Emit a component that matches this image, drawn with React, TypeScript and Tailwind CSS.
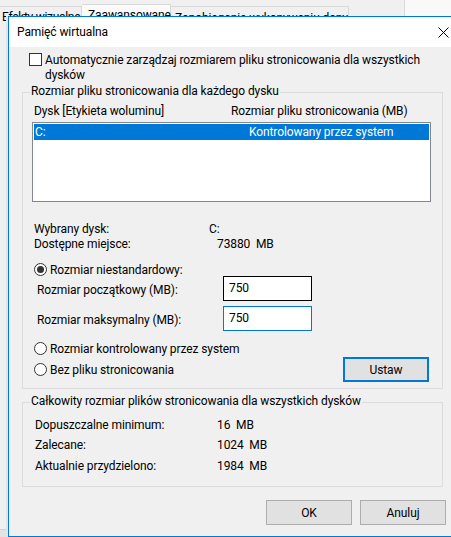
import React from "react";

const font = { fontFamily: "Roboto, 'Noto Sans', sans-serif", letterSpacing: "-0.1px" };

function Radio({ checked }: { checked?: boolean }) {
  return (
    <span className="w-[13px] h-[13px] rounded-full border border-[#333333] bg-white flex items-center justify-center shrink-0">
      {checked && <span className="w-[7px] h-[7px] rounded-full bg-[#333333]" />}
    </span>
  );
}

function Btn({ children, focused }: { children: React.ReactNode; focused?: boolean }) {
  return (
    <div
      className={
        "w-[86px] h-[25px] flex items-center justify-center pt-[1px] bg-[#e1e1e1] text-[#000] shrink-0 " +
        (focused ? "border-2 border-[#0078d7]" : "border border-[#adadad]")
      }
    >
      {children}
    </div>
  );
}

function Legend({ children }: { children: React.ReactNode }) {
  return (
    <span className="absolute left-[7px] top-[-9px] px-[1px] h-[15px] bg-[#f0f0f0] whitespace-nowrap">
      {children}
    </span>
  );
}

export default function App() {
  return (
    <div className="relative w-[451px] h-[537px] overflow-hidden bg-[#f0f0f0] text-[12px] leading-[15px] text-black" style={font}>
      {/* background parent window */}
      <div className="absolute left-0 top-0 w-[405px] h-[537px] bg-[#f0f0f0] border-r border-[#dadada]">
        <div className="flex items-start h-[30px]">
          <div className="w-[82px] h-[26px] mt-[6px] border-r border-t border-[#d9d9d9] pl-[2px] pt-[3px] whitespace-nowrap" style={{ letterSpacing: "-0.3px" }}>Efekty wizualne</div>
          <div className="w-[89px] h-[28px] mt-[4px] bg-[#fafafa] border-r border-t border-[#d9d9d9] pl-[6px] pt-[3px] whitespace-nowrap">Zaawansowane</div>
          <div className="w-[178px] h-[26px] mt-[6px] border-r border-t border-[#d9d9d9] pl-[4px] pt-[4px] whitespace-nowrap overflow-hidden">Zapobieganie wykonywaniu danych</div>
        </div>
        <div className="absolute left-0 top-[529px] w-[404px] h-[8px] bg-[#e3e3e3] border-t border-[#d0d0d0]" />
      </div>
      <div className="absolute left-[405px] top-0 w-[46px] h-[537px] bg-[#f9f9f9]" />
      <div className="absolute left-[6px] top-[16px] w-[2px] h-[521px] bg-[#e4e4e4]" />

      {/* dialog window */}
      <div className="absolute left-[8px] top-[16px] w-[460px] h-[521px] border border-[#0078d7] bg-[#f0f0f0] flex flex-col">
        <div className="h-[30px] bg-white flex items-center pl-[8px] pt-[1px] relative shrink-0">
          <span>Pamięć wirtualna</span>
          <svg className="absolute left-[429px] top-[10px]" width="11" height="11" viewBox="0 0 11 11">
            <path d="M0.5 0.5 L10.5 10.5 M10.5 0.5 L0.5 10.5" stroke="#000" strokeWidth="1" fill="none" />
          </svg>
        </div>
        <div className="h-[489px] flex flex-col pl-[13px] pt-[5px]">
          {/* checkbox */}
          <div className="flex items-start ml-[7px]">
            <span className="w-[13px] h-[13px] mt-[1px] border border-[#333333] bg-white shrink-0" />
            <span className="ml-[3px] pt-[1px]">
              Automatycznie zarządzaj rozmiarem pliku stronicowania dla wszystkich
              <br />
              dysków
            </span>
          </div>

          {/* group 1 */}
          <div className="relative mt-[9px] w-[421px] border border-[#dcdcdc] pb-[6px]">
            <Legend>Rozmiar pliku stronicowania dla każdego dysku</Legend>
            <div className="flex mt-[11px] h-[15px]">
              <span className="ml-[11px] w-[197px]">Dysk [Etykieta woluminu]</span>
              <span>Rozmiar pliku stronicowania (MB)</span>
            </div>
            <div className="ml-[9px] mt-[3px] w-[399px] h-[80px] border border-[#828790] bg-white p-[1px]">
              <div className="h-[16px] bg-[#0078d7] text-white flex items-center pt-[1px]">
                <span className="ml-[1px] w-[214px]">C:</span>
                <span>Kontrolowany przez system</span>
              </div>
            </div>
            <div className="flex mt-[20px] h-[15px]">
              <span className="ml-[11px] w-[175px]">Wybrany dysk:</span>
              <span>C:</span>
            </div>
            <div className="flex h-[15px]">
              <span className="ml-[11px] w-[183px]">Dostępne miejsce:</span>
              <span className="whitespace-pre">73880  MB</span>
            </div>
            <div className="flex items-center mt-[11px] h-[13px] ml-[11px]">
              <Radio checked />
              <span className="ml-[3px] pt-[1px]">Rozmiar niestandardowy:</span>
            </div>
            <div className="flex items-center h-[25px]">
              <span className="ml-[14px] w-[186px] pt-[3px]">Rozmiar początkowy (MB):</span>
              <div className="w-[89px] h-[25px] border border-black bg-white pl-[5px] pt-[4px]">750</div>
            </div>
            <div className="flex items-center h-[25px] mt-[5px]">
              <span className="ml-[14px] w-[186px] pt-[3px]">Rozmiar maksymalny (MB):</span>
              <div className="w-[89px] h-[25px] border border-[#0078d7] bg-white pl-[5px] pt-[4px]">750</div>
            </div>
            <div className="flex items-center mt-[10px] h-[15px] ml-[11px]">
              <Radio />
              <span className="ml-[3px] pt-[1px]">Rozmiar kontrolowany przez system</span>
            </div>
            <div className="flex items-center mt-[1px] h-[25px] ml-[11px]">
              <Radio />
              <span className="ml-[3px] w-[293px] pt-[1px]">Bez pliku stronicowania</span>
              <Btn focused>Ustaw</Btn>
            </div>
          </div>

          {/* group 2 */}
          <div className="relative mt-[13px] w-[421px] border border-[#dcdcdc] pb-[10px]">
            <Legend>Całkowity rozmiar plików stronicowania dla wszystkich dysków</Legend>
            <div className="mt-[12px] flex items-center h-[20px] pt-[1px]">
              <span className="ml-[12px] w-[182px]">Dopuszczalne minimum:</span>
              <span className="whitespace-pre">16  MB</span>
            </div>
            <div className="flex items-center h-[20px] pt-[1px]">
              <span className="ml-[12px] w-[182px]">Zalecane:</span>
              <span className="whitespace-pre">1024  MB</span>
            </div>
            <div className="flex items-center h-[20px] mt-[1px] pt-[1px]">
              <span className="ml-[12px] w-[182px]">Aktualnie przydzielono:</span>
              <span className="whitespace-pre">1984  MB</span>
            </div>
          </div>

          <div className="flex gap-[8px] mt-[13px] ml-[244px]">
            <Btn>OK</Btn>
            <Btn>Anuluj</Btn>
          </div>
        </div>
      </div>
    </div>
  );
}
